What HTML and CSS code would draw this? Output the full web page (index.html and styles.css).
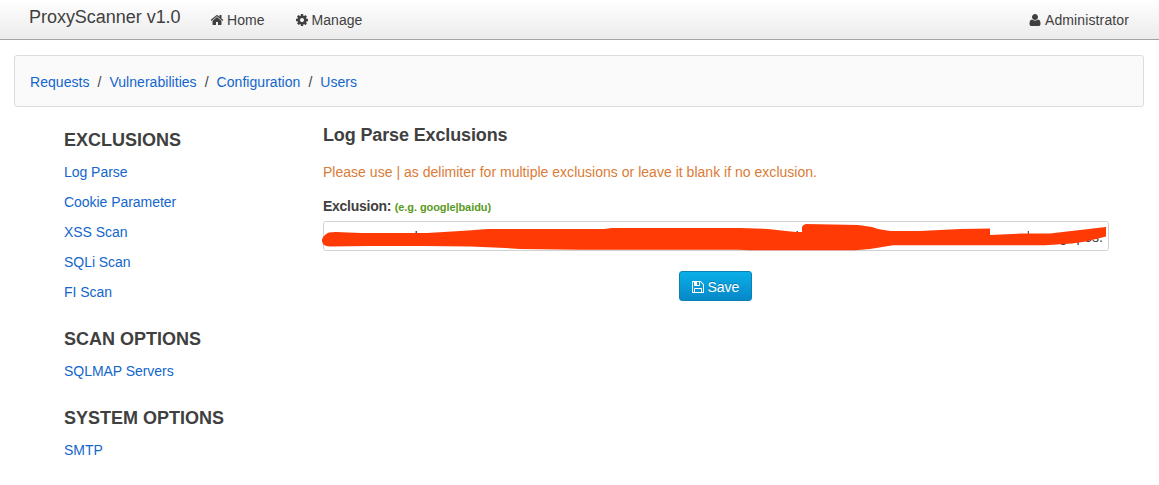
FILE: index.html
```html
<!DOCTYPE html>
<html lang="en">
<head>
<meta charset="utf-8">
<title>ProxyScanner v1.0</title>
<link rel="stylesheet" href="styles.css">
</head>
<body>
<header class="navbar">
  <a class="brand">ProxyScanner v1.0</a>
  <nav class="nav">
    <a class="nav-link"><svg class="icon" viewBox="0 0 1792 1792"><path d="M1472 992v480q0 26-19 45t-45 19h-384v-384h-256v384h-384q-26 0-45-19t-19-45v-480q0-1 .5-3t.5-3l575-474 575 474q1 2 1 6zm223-69l-62 74q-8 9-21 11h-3q-13 0-21-7l-692-577-692 577q-12 8-24 7-13-2-21-11l-62-74q-8-10-7-23.5t11-21.5l719-599q32-26 76-26t76 26l244 204v-195q0-14 9-23t23-9h192q14 0 23 9t9 23v408l219 182q10 8 11 21.5t-7 23.5z"/></svg><span>Home</span></a>
    <a class="nav-link"><svg class="icon" viewBox="0 0 1792 1792"><path d="M1152 896q0-106-75-181t-181-75-181 75-75 181 75 181 181 75 181-75 75-181zm512-109v222q0 12-8 23t-20 13l-185 28q-19 54-39 91 35 50 107 138 10 12 10 25t-9 23q-27 37-99 108t-94 71q-12 0-26-9l-138-108q-44 23-91 38-16 136-29 186-7 28-36 28h-222q-14 0-24.5-8.5t-11.5-21.5l-28-184q-49-16-90-37l-141 107q-10 9-25 9-14 0-25-11-126-114-165-168-7-10-7-23 0-12 8-23 15-21 51-66.5t54-70.5q-27-50-41-99l-183-27q-13-2-21-12.5t-8-23.5v-222q0-12 8-23t19-13l186-28q14-46 39-92-40-57-107-138-10-12-10-24 0-10 9-23 26-36 98.5-107.5t94.5-71.5q13 0 26 10l138 107q44-23 91-38 16-136 29-186 7-28 36-28h222q14 0 24.5 8.5t11.5 21.5l28 184q49 16 90 37l142-107q9-9 24-9 13 0 25 10 129 119 165 170 7 8 7 22 0 12-8 23-15 21-51 66.5t-54 70.5q26 50 41 98l183 28q13 2 21 12.5t8 23.5z"/></svg><span>Manage</span></a>
  </nav>
  <a class="nav-link account"><svg class="icon" viewBox="0 0 1792 1792"><path d="M1600 1405q0 120-73 189.5t-194 69.5h-874q-121 0-194-69.5t-73-189.5q0-53 3.5-103.5t14-109 26.5-108.5 43-97.5 62-81 85.5-53.5 111.5-20q9 0 42 21.5t74.5 48 108 48 133.5 21.5 133.5-21.5 108-48 74.5-48 42-21.5q61 0 111.5 20t85.5 53.5 62 81 43 97.5 26.5 108.5 14 109 3.5 103.5zm-320-893q0 159-112.5 271.5t-271.5 112.5-271.5-112.5-112.5-271.5 112.5-271.5 271.5-112.5 271.5 112.5 112.5 271.5z"/></svg><span>Administrator</span></a>
</header>

<nav class="breadcrumb">
  <a class="link">Requests</a><span class="divider">/</span>
  <a class="link">Vulnerabilities</a><span class="divider">/</span>
  <a class="link">Configuration</a><span class="divider">/</span>
  <a class="link">Users</a>
</nav>

<div class="page">
  <aside class="sidebar">
    <section class="group">
      <h3 class="group-title">EXCLUSIONS</h3>
      <a class="link item">Log Parse</a>
      <a class="link item">Cookie Parameter</a>
      <a class="link item">XSS Scan</a>
      <a class="link item">SQLi Scan</a>
      <a class="link item">FI Scan</a>
    </section>
    <section class="group">
      <h3 class="group-title">SCAN OPTIONS</h3>
      <a class="link item">SQLMAP Servers</a>
    </section>
    <section class="group">
      <h3 class="group-title">SYSTEM OPTIONS</h3>
      <a class="link item">SMTP</a>
    </section>
  </aside>

  <main class="content">
    <h3 class="title">Log Parse Exclusions</h3>
    <p class="notice">Please use | as delimiter for multiple exclusions or leave it blank if no exclusion.</p>
    <div class="label">Exclusion: <span class="hint">(e.g. google|baidu)</span></div>
    <div class="field">
      <span class="value">g.*pos.</span>
      <!-- Redaction stroke over the field value -->
      <svg class="redaction" viewBox="320 220 790 32">
        <g class="specks"><path d="M415.5 231h1.5v4h-1.500zM796.500 231h1.500v2h-1.500zM1027.800 231h1.200v4h-1.200z"/></g>
        <path class="stroke" d="M322 241C322 237 325 234.500 329 232.500Q331 232 336 232L361 233H427L452 231.500 468 230.500 488 229H604L612 228H740L768 229 786 231 796 232H802V227Q803 224.500 806 224L858 225 872 227 878 229 890 231H920L960 229 990 228.500V235L1022 233.500H1050L1080 230 1106 227V236.500L1086 241.500 1072 243.500 1045 245.300H893L870 249 855 250.300H750L738 249.700H580L520 249 500 247.700 470 246.500 422 246H370L330 246.500Q322 246 322 241Z"/>
      </svg>
    </div>
    <div class="actions">
      <button class="save"><svg class="icon" viewBox="0 0 1792 1792"><path d="M512 1536h768v-384h-768v384zm896 0h128v-896q0-14-10-38.5t-20-34.5l-281-281q-10-10-34-20t-39-10v416q0 40-28 68t-68 28h-576q-40 0-68-28t-28-68v-416h-128v1280h128v-416q0-40 28-68t68-28h832q40 0 68 28t28 68v416zm-384-928v-320q0-13-9.500-22.500t-22.500-9.500h-192q-13 0-22.500 9.500t-9.500 22.500v320q0 13 9.500 22.500t22.500 9.500h192q13 0 22.500-9.500t9.500-22.500zm640 32v928q0 40-28 68t-68 28h-1344q-40 0-68-28t-28-68v-1344q0-40 28-68t68-28h928q40 0 88 20t76 48l280 280q28 28 48 76t20 88z"/></svg><span>Save</span></button>
    </div>
  </main>
</div>
</body>
</html>
```
FILE: styles.css
```css
* { box-sizing: border-box; }

body {
  margin: 0;
  background: #fff;
  color: #404040;
  font: 14px/20px "Liberation Sans", Arial, sans-serif;
}

.navbar {
  display: flex;
  height: 40px;
  padding: 0 30px 0 29px;
  border-bottom: 1px solid #a3a3a3;
  background: linear-gradient(#fff, #ebebeb);
}

.brand {
  width: 181px;
  padding-top: 7px;
  font-size: 18px;
  letter-spacing: -0.03px;
  white-space: nowrap;
}

.nav { display: flex; gap: 30px; }

.nav-link {
  display: flex;
  gap: 3px;
  padding-top: 10px;
  letter-spacing: 0.05px;
}

.account { letter-spacing: 0.12px; margin-left: auto; }

.icon {
  flex: none;
  width: 14px;
  height: 14px;
  margin-top: 3px;
  fill: currentColor;
}

.link { color: #1266cc; }

.breadcrumb {
  display: flex;
  height: 52px;
  margin: 15px 15px 0 14px;
  padding: 16px 15px;
  border: 1px solid #dcdcdc;
  border-radius: 3px;
  background: #fafafa;
  letter-spacing: 0.04px;
}

.divider { margin: 0 8px; }

.page {
  display: flex;
  padding: 17px 50px 0 64px;
}

.sidebar { width: 259px; }

.group {
  display: flex;
  flex-direction: column;
  margin-bottom: 16px;
}

.group-title,
.title {
  margin: 0;
  font-size: 18px;
  line-height: 32px;
}

.group-title { margin-bottom: 1px; }

.item {
  line-height: 30px;
  letter-spacing: -0.04px;
}

.content { flex: 1; }

.title {
  margin-top: -5px;
  letter-spacing: -0.13px;
}

.notice {
  margin: 11px 0 14px;
  color: #db7b35;
  letter-spacing: 0.02px;
}

.label {
  font-weight: bold;
  letter-spacing: -0.27px;
  margin-bottom: 4px;
}

.hint {
  color: #5a9a23;
  font-size: 11px;
  letter-spacing: -0.08px;
}

.field {
  position: relative;
  display: flex;
  justify-content: flex-end;
  height: 30px;
  padding: 5px 5px;
  border: 1px solid #d2d2d2;
  border-radius: 3px;
}

.redaction {
  position: absolute;
  top: -2px;
  left: -4px;
  width: 790px;
  height: 32px;
}

.stroke { fill: #ff3a05; }
.specks { fill: #555; }

.actions {
  display: flex;
  justify-content: center;
  margin: 20px 1px 0 0;
  padding-right: 1px;
}

.save {
  display: flex;
  gap: 3px;
  width: 73px;
  height: 30px;
  padding: 5px 11px;
  border: 1px solid #0c7fb4;
  border-radius: 3px;
  background: linear-gradient(#0aafe8, #0688c8);
  color: #fff;
  font: 14px/20px "Liberation Sans", Arial, sans-serif;
  text-shadow: 0 -1px 0 rgba(0, 0, 0, 0.25);
}
```
